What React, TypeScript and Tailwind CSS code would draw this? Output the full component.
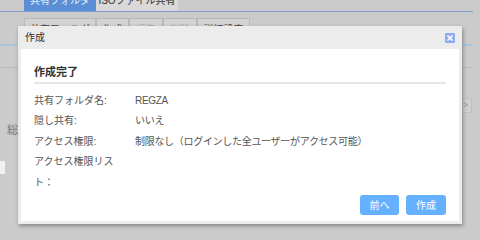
const rows = [
  { label: "共有フォルダ名:", value: "REGZA" },
  { label: "隠し共有:", value: "いいえ" },
  { label: "アクセス権限:", value: "制限なし（ログインした全ユーザーがアクセス可能）" },
  { label: "アクセス権限リスト：", value: "" },
];

const subTabs = [
  { name: "共有フォルダ", w: "w-[72px]", muted: false },
  { name: "作成", w: "w-[33px]", muted: false },
  { name: "編集", w: "w-[34px]", muted: true },
  { name: "削除", w: "w-[34px]", muted: true },
  { name: "詳細設定", w: "w-[53px]", muted: false },
];

export default function App() {
  return (
    <div
      className="relative h-[240px] w-[480px] overflow-hidden bg-[#cbcbcb] text-[10px] text-[#555]"
      style={{ fontFamily: '"Liberation Sans", "Noto Sans CJK JP", sans-serif' }}
    >
      {/* page behind the dialog */}
      <div className="flex flex-col">
        <div className="-mt-[11px] flex pl-[24px]">
          <div className="flex h-[22px] w-[72px] items-center justify-center whitespace-nowrap bg-[#5b8ed4] text-[10px] text-[#e6eef9]">
            共有フォルダ
          </div>
          <div className="flex h-[22px] w-[82px] items-center justify-center whitespace-nowrap bg-[#d9d9d9] text-[10px] text-[#333]">
            ISOファイル共有
          </div>
        </div>
        <div className="h-px w-[473px] bg-[#7f9fd0]" />
        <div className="mt-[6px] flex pl-[24px]">
          {subTabs.map((t) => (
            <div
              key={t.name}
              className={`flex h-[22px] ${t.w} items-center justify-center whitespace-nowrap border border-[#b9b9b9] bg-[#d3d3d3] ${
                t.muted ? "text-[#b0b0b0]" : "text-[#444]"
              }`}
            >
              {t.name}
            </div>
          ))}
        </div>
        <div className="mt-[4px] h-[2px] w-[473px] bg-[#a9c7dc]" />
        <div className="mt-[21px] h-px w-[473px] bg-[#b9b9b9]" />
        <div className="mt-[30px] flex w-[472px] justify-between">
          <div className="pl-[7px] pt-[24px] text-[11px] text-[#777]">総容量</div>
          <div className="flex h-[15px] w-[30px] items-center justify-end border border-[#c0c0c0] bg-[#d0d0d0] pr-[3px] text-[9px] text-[#999]">
            &gt;
          </div>
        </div>
        <div className="mt-[22px] h-[13px] w-[5px] bg-[#f0f0f0]" />
      </div>

      {/* dialog */}
      <div className="absolute left-[18px] top-[26px] flex h-[198px] w-[444px] flex-col bg-[#ececec] shadow-[1px_2px_4px_rgba(0,0,0,0.35)]">
        <div className="flex h-[23px] shrink-0 items-center justify-between pl-[7px] pr-[7px]">
          <span className="text-[10px] text-[#333]">作成</span>
          <span className="flex h-[10px] w-[10px] items-center justify-center rounded-[1px] bg-[#8eaaf0]">
            <svg width="8" height="8" viewBox="0 0 8 8">
              <path d="M1.5 1.5L6.5 6.5M6.5 1.5L1.5 6.5" stroke="#fff" strokeWidth="1.6" />
            </svg>
          </span>
        </div>
        <div className="mx-[3px] mb-[3px] flex flex-1 flex-col bg-white px-[13px] pt-[15px]">
          <div className="text-[11px] font-bold leading-[16px] text-[#333]">作成完了</div>
          <div className="mt-[2px] h-[2px] bg-[#e6e6e6]" />
          <div className="mt-[7px] flex flex-col">
            {rows.map((r) => (
              <div key={r.label} className="flex leading-[20.4px]">
                <div className="w-[86px] shrink-0">{r.label}</div>
                <div className="ml-[15px] tracking-[-0.3px]">{r.value}</div>
              </div>
            ))}
          </div>
          <div className="mt-[2px] flex justify-end gap-[7px]">
            <button className="h-[20px] w-[39px] rounded-[3px] bg-[#66b1ff] text-[10px] text-white">前へ</button>
            <button className="h-[20px] w-[40px] rounded-[3px] bg-[#66b1ff] text-[10px] text-white">作成</button>
          </div>
        </div>
      </div>
    </div>
  );
}
